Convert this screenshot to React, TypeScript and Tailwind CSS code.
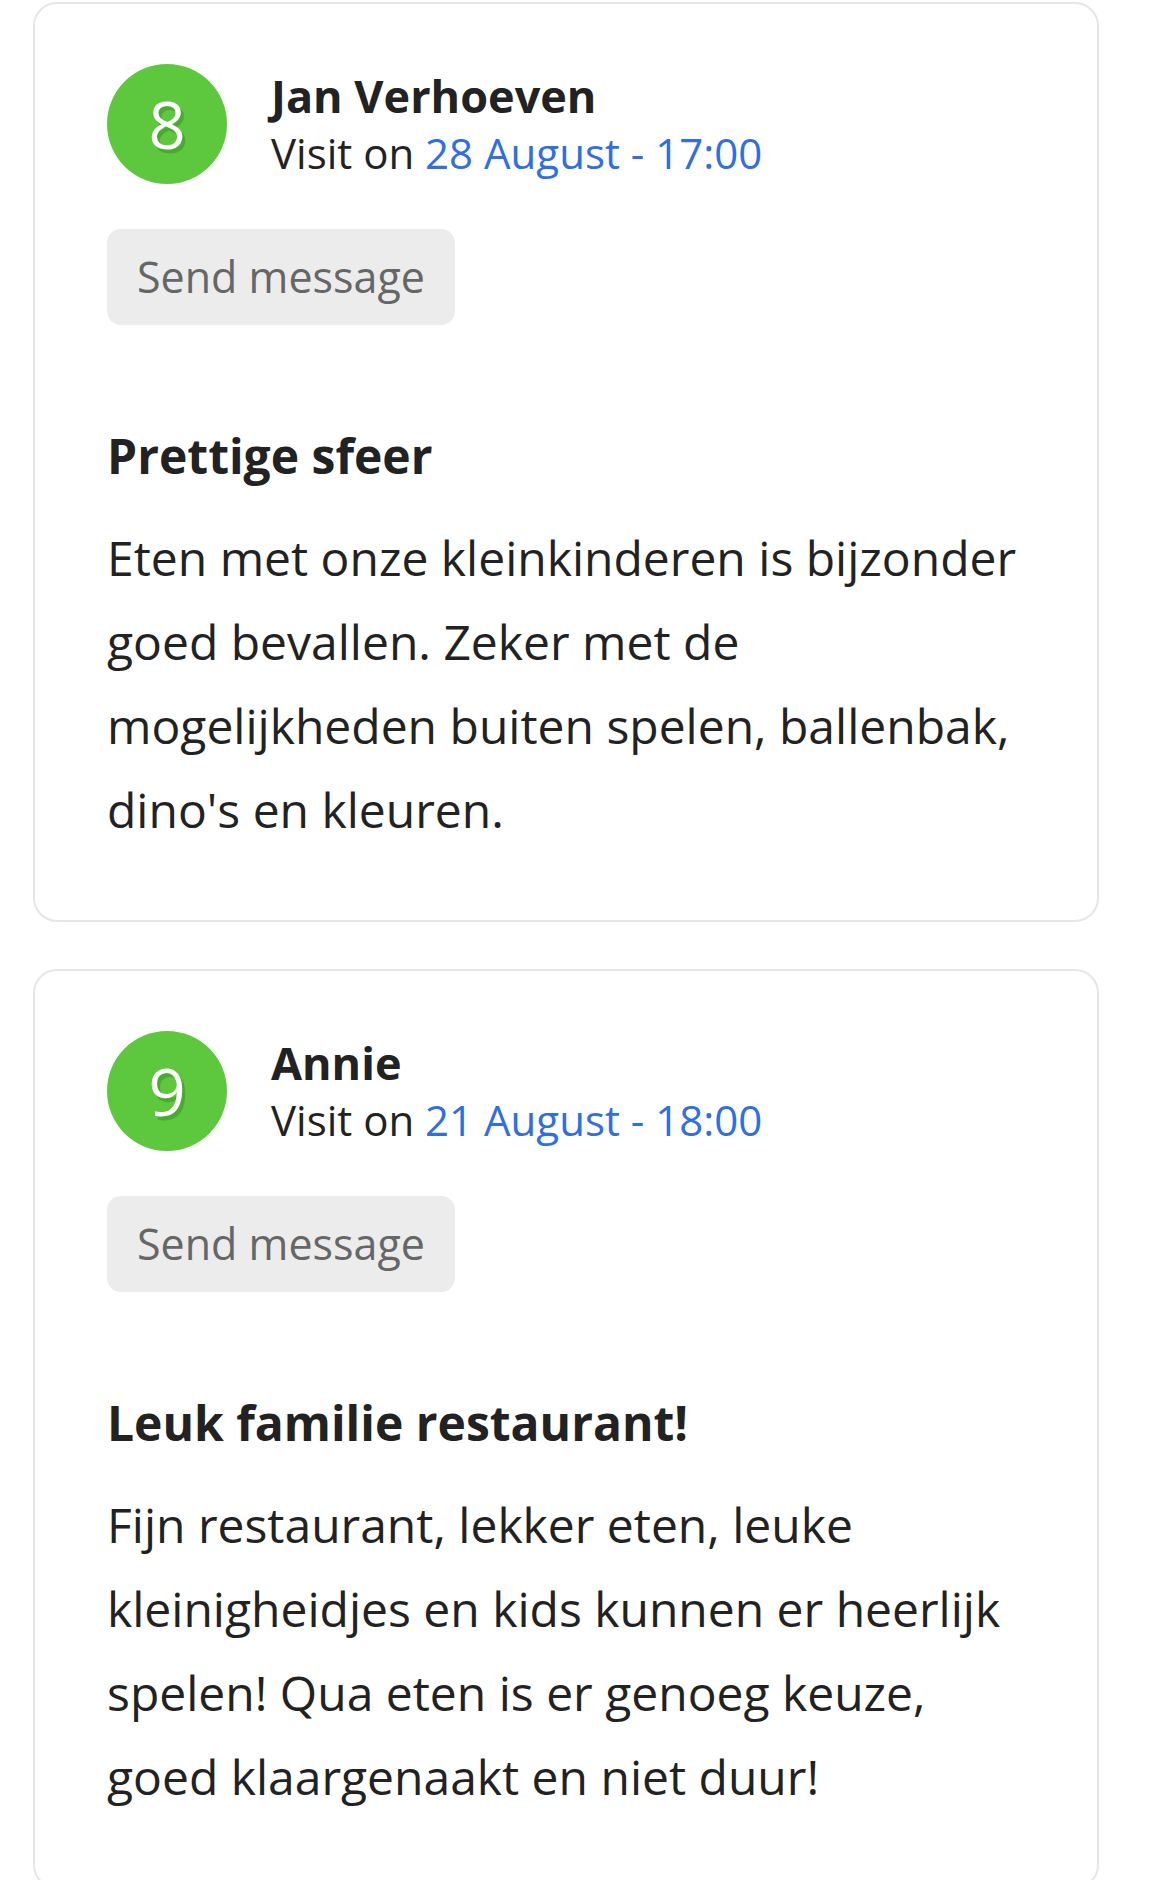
const REVIEWS = [
  {
    score: 8,
    name: 'Jan Verhoeven',
    visit: '28 August - 17:00',
    title: 'Prettige sfeer',
    body: "Eten met onze kleinkinderen is bijzonder goed bevallen. Zeker met de mogelijkheden buiten spelen, ballenbak, dino's en kleuren.",
  },
  {
    score: 9,
    name: 'Annie',
    visit: '21 August - 18:00',
    title: 'Leuk familie restaurant!',
    body: 'Fijn restaurant, lekker eten, leuke kleinigheidjes en kids kunnen er heerlijk spelen! Qua eten is er genoeg keuze, goed klaargenaakt en niet duur!',
  },
]

type Review = (typeof REVIEWS)[number]

function ReviewCard({ review }: { review: Review }) {
  return (
    <div className="rounded-[24px] border-2 border-[#e6e6e6] bg-white px-[72px] pt-[60px] pb-[68px]">
      <div className="flex items-center gap-[44px]">
        <div className="flex h-[120px] w-[120px] shrink-0 items-center justify-center rounded-full bg-[#5dc73e] text-[65px] leading-none text-white [text-shadow:3px_4px_0_#48aa31]">
          {review.score}
        </div>
        <div>
          <div className="text-[45px] font-bold leading-[57px] text-[#222]">{review.name}</div>
          <div className="text-[42px] leading-[57px] text-[#222]">
            Visit on <span className="text-[#2f6ee3]">{review.visit}</span>
          </div>
        </div>
      </div>

      <button className="mt-[45px] flex h-[96px] items-center rounded-[14px] bg-[#ececec] px-[30px] text-[43px] text-[#666]">
        Send message
      </button>

      <h3 className="mt-[101px] text-[48px] font-bold leading-[60px] text-[#222]">{review.title}</h3>
      <p className="mt-[30px] text-[48px] leading-[84px] text-[#222]">{review.body}</p>
    </div>
  )
}

export default function App() {
  return (
    <div className="min-h-screen bg-white pt-[2px] font-['Open_Sans',sans-serif]">
      <div className="ml-[33px] flex w-[1066px] flex-col gap-[47px]">
        {REVIEWS.map((r) => (
          <ReviewCard key={r.name} review={r} />
        ))}
      </div>
    </div>
  )
}
